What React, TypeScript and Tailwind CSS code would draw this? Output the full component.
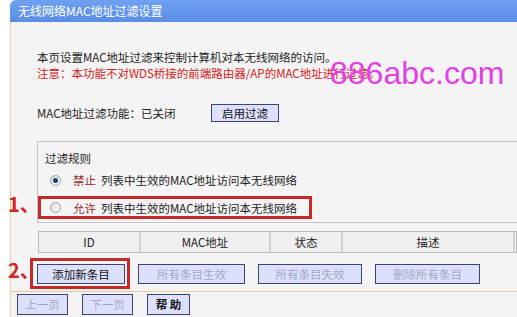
const FONT = "font-['Noto_Sans_CJK_SC','Noto_Sans',sans-serif]";

function Radio({ checked = false }: { checked?: boolean }) {
  return (
    <span className="flex h-[11px] w-[11px] items-center justify-center rounded-full border border-[#9aa0a8] bg-gradient-to-br from-[#d8dade] to-white">
      {checked && <span className="h-[5px] w-[5px] rounded-full bg-[#1d3f74]" />}
    </span>
  );
}

function Btn({
  children,
  width,
  disabled = false,
  bold = false,
  height = "h-[20px]",
}: {
  children: React.ReactNode;
  width: string;
  disabled?: boolean;
  bold?: boolean;
  height?: string;
}) {
  return (
    <div
      className={`${width} ${height} flex items-center justify-center border border-[#3a4670] bg-[#dde0fa] text-[11.5px] ${
        disabled ? "text-[#a3a8c8]" : "text-[#141414]"
      } ${bold ? "font-bold" : ""}`}
    >
      {children}
    </div>
  );
}

const COLS = [
  { label: "ID", w: "w-[100px]" },
  { label: "MAC地址", w: "w-[130px]" },
  { label: "状态", w: "w-[72px]" },
  { label: "描述", w: "w-[172px]" },
  { label: "", w: "flex-1" },
];

export default function App() {
  return (
    <div className={`relative h-[317px] w-[517px] overflow-hidden bg-white pl-[10px] ${FONT}`}>
      <div className="flex h-full flex-col">
        <div className="h-[22px] rounded-tl-[6px] bg-gradient-to-b from-[#6fa0f2] to-[#5a8de6] pl-[8px] text-[12px] leading-[22px] text-white">
          无线网络MAC地址过滤设置
        </div>

        <div className="flex flex-1 flex-col border-l border-[#f0cfb0] bg-[#f4f4f4]">
          <div className="pl-[26px] pt-[27px] text-[11.5px] leading-[16px]">
            <p className="text-[#1c1c1c]">本页设置MAC地址过滤来控制计算机对本无线网络的访问。</p>
            <p className="text-[#d42020]">注意：本功能不对WDS桥接的前端路由器/AP的MAC地址进行过滤。</p>

            <div className="mt-[23px] flex h-[18px] items-center text-[#1c1c1c]">
              <span className="w-[174px]">MAC地址过滤功能：已关闭</span>
              <Btn width="w-[68px]" height="h-[18px]">启用过滤</Btn>
            </div>

            <div className="mt-[19px] h-[82px] border-l border-t border-b border-[#c6c6c6] pt-[8px]">
              <p className="pl-[7px] text-[#1c1c1c]">过滤规则</p>
              <div className="mt-[6px] flex h-[16px] items-center pl-[12px]">
                <Radio checked />
                <span className="ml-[12px] text-[#9a2a2a]">禁止</span>
                <span className="ml-[5px] text-[#1c1c1c]">列表中生效的MAC地址访问本无线网络</span>
              </div>
              <div className="mt-[8px] flex h-[23px] w-[274px] items-center border-[3px] border-[#c42a2a] pl-[9px]">
                <Radio />
                <span className="ml-[12px] text-[#9a2a2a]">允许</span>
                <span className="ml-[5px] text-[#1c1c1c]">列表中生效的MAC地址访问本无线网络</span>
              </div>
            </div>

            <div className="ml-[1px] mt-[8px] flex h-[22px] border border-[#bdbdbd] bg-[#f0f0f0] text-[#1c1c1c]">
              {COLS.map((c, i) => (
                <div
                  key={i}
                  className={`${c.w} flex items-center justify-center ${i > 0 ? "border-l-2 border-[#d2d2d2]" : ""}`}
                >
                  {c.label}
                </div>
              ))}
            </div>

            <div className="mt-[5px] flex h-[31px] items-center">
              <div className="-ml-[7px] flex h-[31px] w-[100px] items-center border-[3px] border-[#c42a2a] pl-[4px]">
                <Btn width="w-[88px]">添加新条目</Btn>
              </div>
              <div className="ml-[8px] flex gap-[13px]">
                <Btn width="w-[107px]" disabled>所有条目生效</Btn>
                <Btn width="w-[104px]" disabled>所有条目失效</Btn>
                <Btn width="w-[105px]" disabled>删除所有条目</Btn>
              </div>
            </div>
          </div>

          <div className="mt-[2px] flex h-[27px] gap-[14px] border-t border-b border-[#f2c8a0] pl-[6px] pt-[2px]">
            <Btn width="w-[51px]" height="h-[21px]" disabled>上一页</Btn>
            <Btn width="w-[51px]" height="h-[21px]" disabled>下一页</Btn>
            <Btn width="w-[43px]" height="h-[21px]" bold>帮 助</Btn>
          </div>
        </div>
      </div>

      <span className="absolute left-[8px] top-[192px] text-[20px] font-bold leading-[24px] text-[#d42424]">1、</span>
      <span className="absolute left-[8px] top-[258px] text-[20px] font-bold leading-[24px] text-[#d42424]">2、</span>

      <span className="absolute left-[330px] top-[57px] font-['Liberation_Sans',sans-serif] text-[32px] leading-[32px] text-[#e23fe6]">
        886abc.com
      </span>
    </div>
  );
}
